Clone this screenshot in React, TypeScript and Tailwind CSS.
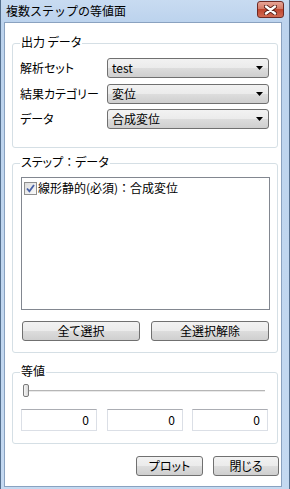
import React from 'react';

// Vista-style "combobox" drop-down list
const Select: React.FC<{ value: string }> = ({ value }) => (
  <div className="flex h-[20px] w-[162px] items-center justify-between rounded-[3px] border border-[#707070] bg-[linear-gradient(#f2f2f2,#ebebeb_50%,#dddddd_50%,#cfcfcf)] pl-[4px] pr-[5px]">
    <span className="leading-[14px]">{value}</span>
    <svg width="7" height="4" viewBox="0 0 7 4">
      <path d="M0 0h7L3.5 4z" fill="#000" />
    </svg>
  </div>
);

const Button: React.FC<{ label: string; className?: string }> = ({ label, className = '' }) => (
  <div
    className={`flex h-[20px] items-center justify-center rounded-[3px] border border-[#707070] bg-[linear-gradient(#f2f2f2,#ebebeb_50%,#dddddd_50%,#cfcfcf)] leading-[14px] ${className}`}
  >
    {label}
  </div>
);

const Group: React.FC<{ title: React.ReactNode; className?: string; children: React.ReactNode }> = ({
  title,
  className = '',
  children,
}) => (
  <div className={`relative w-[266px] rounded-[3px] border border-[#d5dfe5] ${className}`}>
    <span className="absolute -top-[9px] left-[7px] bg-white px-[1px] leading-[14px]">{title}</span>
    {children}
  </div>
);

const NumBox: React.FC<{ value: string }> = ({ value }) => (
  <div className="flex h-[22px] w-[76px] items-center justify-end border border-[#dbdfe6] border-t-[#abadb3] pr-[7px] leading-[14px]">
    {value}
  </div>
);

export default function App() {
  const rows = [
    { label: '解析セット', value: 'test', mt: 'mt-0' },
    { label: '結果カテゴリー', value: '変位', mt: 'mt-[6px]' },
    { label: 'データ', value: '合成変位', mt: 'mt-[5px]' },
  ];

  return (
    <div className="flex h-[489px] w-[290px] flex-col border-x border-[#55708f] bg-[linear-gradient(#c8dbf1,#bcd3ed_22px,#c4d9f1)] font-['Noto_Sans_CJK_JP','Noto_Sans',sans-serif] text-[12px] text-black [font-feature-settings:'palt']">
      {/* Title bar */}
      <div className="flex h-[22px] shrink-0 items-center justify-between pl-[5px] pr-[5px]">
        <span className="leading-[14px] [font-feature-settings:normal]">複数ステップの等値面</span>
        <div className="mb-[3px] flex h-[17px] w-[27px] items-center justify-center rounded-[3px] border border-[#6e2a24] bg-[linear-gradient(#e7a597,#d47a66_45%,#c0462f_50%,#d06a52)]">
          <svg width="13" height="10" viewBox="0 0 13 10">
            <path d="M2 1.5l9 7M11 1.5l-9 7" stroke="#5a2219" strokeWidth="4.2" strokeLinecap="round" />
            <path d="M2 1.5l9 7M11 1.5l-9 7" stroke="#fff" strokeWidth="2.4" strokeLinecap="round" />
          </svg>
        </div>
      </div>

      {/* Client area */}
      <div className="ml-[3px] flex h-[465px] w-[278px] flex-col border border-[#8aa2c0] bg-white pl-[7px]">
        <Group title="出力 データ" className="mt-[20px] h-[105px] pl-[7px] pt-[14px]">
          {rows.map((r) => (
            <div key={r.label} className={`flex items-center ${r.mt}`}>
              <span className="w-[87px] leading-[14px]">{r.label}</span>
              <Select value={r.value} />
            </div>
          ))}
        </Group>

        <Group
          title={
            <>
              ステップ<span className="[font-feature-settings:normal]">：</span>データ
            </>
          }
          className="mt-[15px] h-[190px] pl-[8px] pt-[13px]"
        >
          <div className="h-[133px] w-[249px] border border-[#828790] pl-[2px] pt-[3px]">
            <div className="flex items-center gap-[1px]">
              <div className="flex h-[13px] w-[13px] items-center justify-center border border-[#8f8f8f] bg-[linear-gradient(135deg,#dcdcdc,#fafafa)]">
                <svg width="9" height="9" viewBox="0 0 9 9">
                  <path d="M1 4.5l2.4 2.8L8 1" stroke="#4760a6" strokeWidth="1.8" fill="none" />
                </svg>
              </div>
              <span className="leading-[14px] [font-feature-settings:normal]">線形静的(必須)：合成変位</span>
            </div>
          </div>
          <div className="mt-[11px] ml-[1px] flex gap-[11px]">
            <Button label="全て選択" className="w-[118px]" />
            <Button label="全選択解除" className="w-[118px]" />
          </div>
        </Group>

        <Group title="等値" className="mt-[19px] h-[72px] pl-[8px] pt-[11px]">
          <div className="flex h-[13px] items-center pl-[2px]">
            <div className="h-[13px] w-[6px] rounded-[2px] border border-[#7b7b7b] bg-[linear-gradient(90deg,#f4f4f4,#d8d8d8)]" />
            <div className="h-[2px] w-[236px] border-t border-[#b6b6b6] bg-[#e9e9e9]" />
          </div>
          <div className="mt-[12px] flex">
            <NumBox value="0" />
            <div className="ml-[10px]">
              <NumBox value="0" />
            </div>
            <div className="ml-[9px]">
              <NumBox value="0" />
            </div>
          </div>
        </Group>

        <div className="mt-[12px] flex justify-end gap-[10px] pr-[2px]">
          <Button label="プロット" className="h-[19px] w-[67px]" />
          <Button label="閉じる" className="h-[19px] w-[66px]" />
        </div>
      </div>
    </div>
  );
}
